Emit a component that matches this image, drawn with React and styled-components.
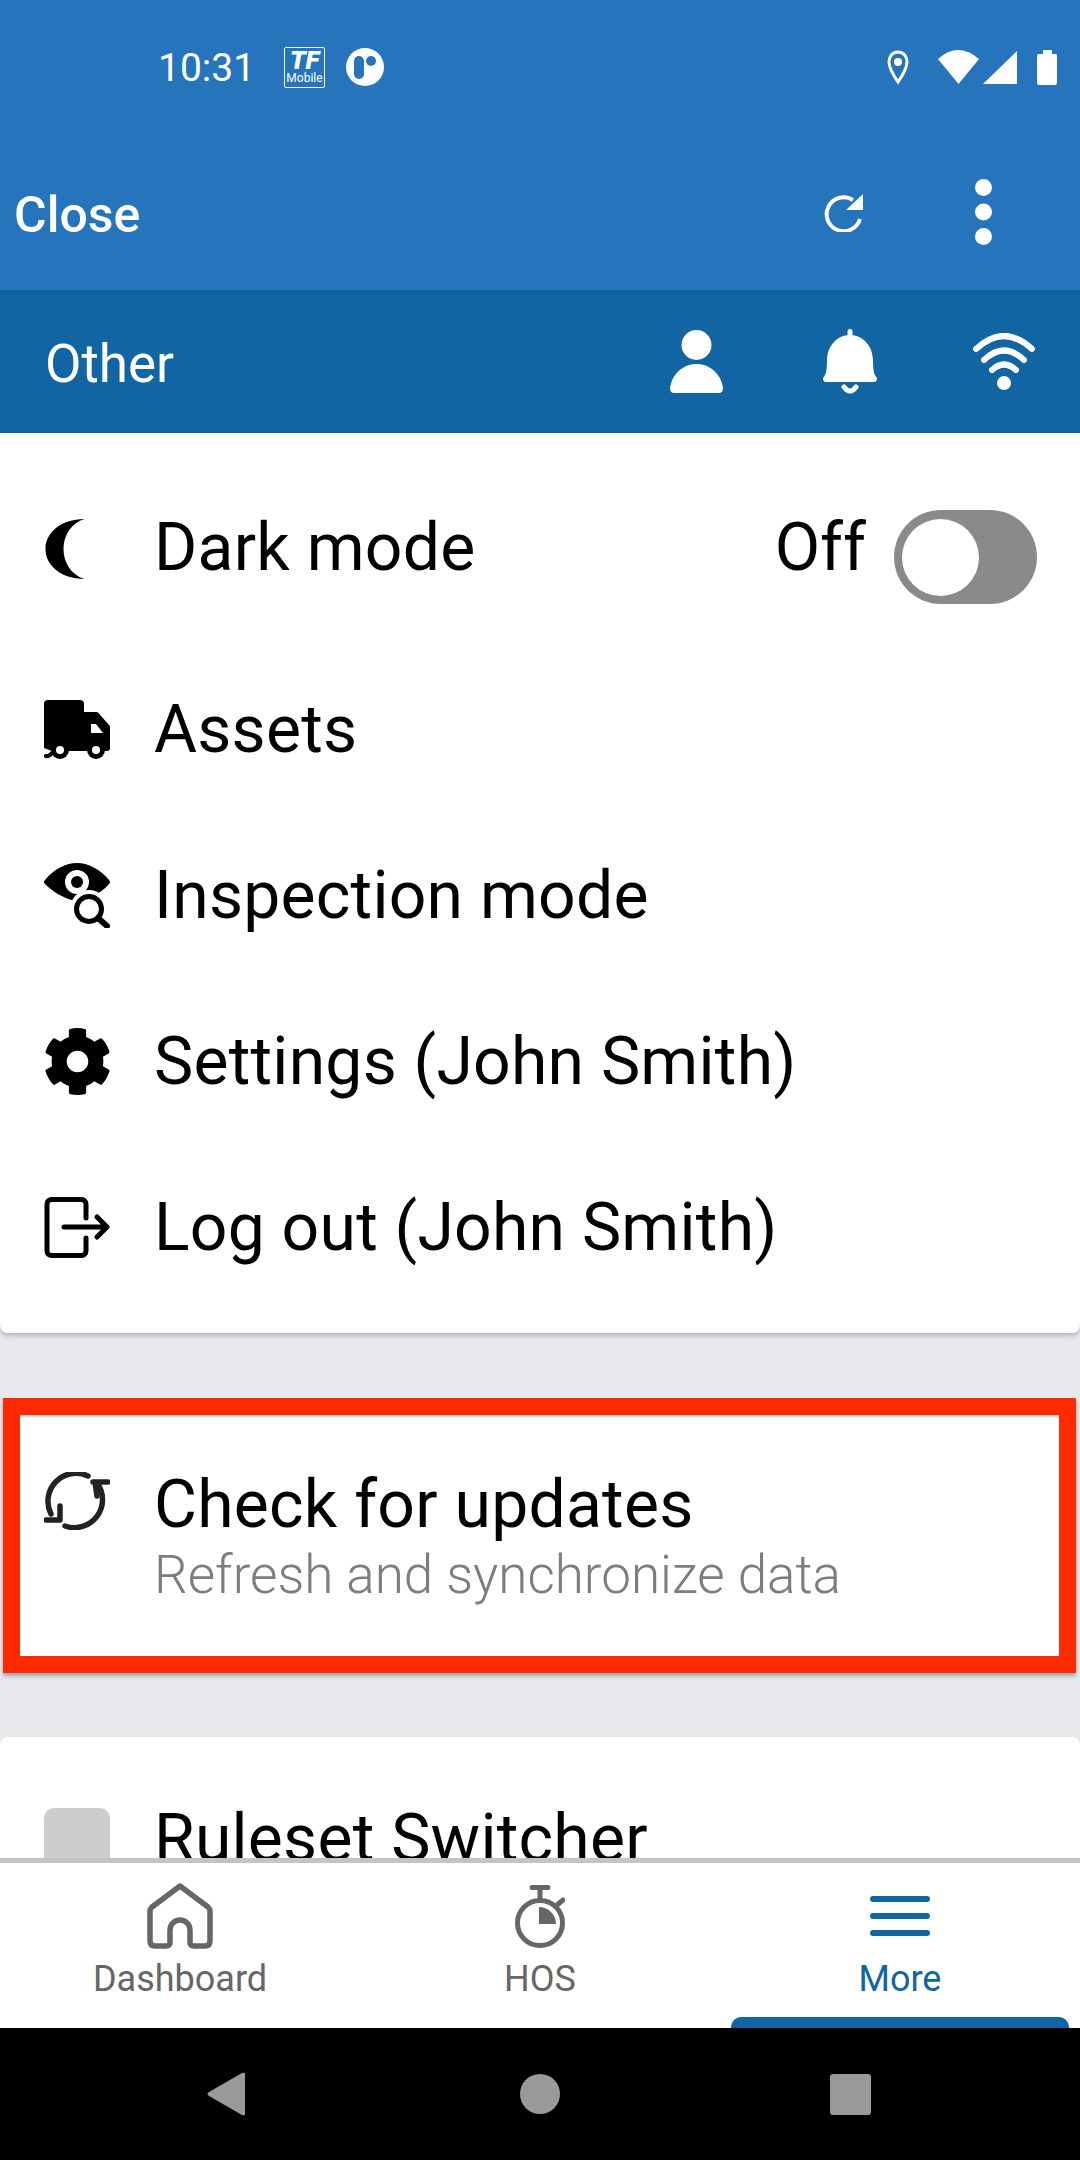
import styled, { createGlobalStyle } from "styled-components";
import { FaCog } from "react-icons/fa";

const GlobalStyle = createGlobalStyle`
  html, body {
    margin: 0;
    padding: 0;
    background: #000;
  }
  * {
    box-sizing: border-box;
  }
`;

const Page = styled.div`
  width: 1080px;
  height: 2160px;
  display: flex;
  flex-direction: column;
  overflow: hidden;
  font-family: Roboto, "Liberation Sans", sans-serif;
  background: #e8e9ed;
`;

const TopBar = styled.header`
  height: 290px;
  flex: none;
  background: #2574bc;
  color: #fff;
  display: flex;
  flex-direction: column;
`;

const StatusBar = styled.div`
  height: 134px;
  padding: 0 22px 0 158px;
  display: flex;
  align-items: center;
`;

const Clock = styled.span`
  font-size: 39px;
  font-weight: 400;
  width: 126px;
  padding-top: 2px;
`;

const TfBadge = styled.div`
  width: 41px;
  height: 41px;
  border: 1.5px solid #fff;
  border-radius: 2px;
  display: flex;
  flex-direction: column;
  align-items: center;
  line-height: 1;
  margin-right: 21px;
`;

const TfMark = styled.span`
  font-size: 26px;
  font-weight: 900;
  font-style: italic;
  line-height: 24px;
`;

const TfSub = styled.span`
  font-size: 12px;
  line-height: 12px;
`;

const StatusRight = styled.div`
  margin-left: auto;
  display: flex;
  align-items: center;
`;

const Toolbar = styled.div`
  height: 156px;
  padding-left: 14px;
  display: flex;
  align-items: center;
`;

const CloseLabel = styled.span`
  font-size: 50px;
  font-weight: 500;
  padding-top: 5px;
`;

const ToolActions = styled.div`
  margin-left: auto;
  display: flex;
  align-items: center;
  padding-right: 88px;
  gap: 112px;
`;

const SubHeader = styled.div`
  height: 143px;
  flex: none;
  background: #1165a2;
  box-shadow: inset 0 3px 3px -2px #0e5a92;
  color: #fff;
  padding: 0 45px;
  display: flex;
  align-items: center;
`;

const SubTitle = styled.span`
  font-size: 53px;
  font-weight: 400;
  padding-top: 4px;
`;

const SubActions = styled.div`
  margin-left: auto;
  display: flex;
  align-items: center;

  svg:nth-child(1) {
    margin-right: 100px;
  }
  svg:nth-child(2) {
    margin-right: 96px;
  }
`;

const Content = styled.main`
  flex: 1;
  min-height: 0;
  overflow: hidden;
`;

const Card = styled.section`
  background: #fff;
  border-radius: 8px;
  padding: 15px 0 23px;
  box-shadow: 0 3px 4px rgba(0, 0, 0, 0.2);
`;

const FlatCard = styled(Card)`
  border-radius: 0 0 8px 8px;
`;

const Row = styled.div`
  height: ${(p) => (p.$tall ? 198 : 166)}px;
  padding: 0 43px 0 44px;
  display: flex;
  align-items: center;
  color: #000;
`;

const IconSlot = styled.span`
  width: 66px;
  flex: none;
  margin-right: 44px;
  display: flex;
  justify-content: center;
  align-items: center;
  font-size: 69px;
  line-height: 0;

  svg {
    flex: none;
  }
`;

const RowLabel = styled.span`
  font-size: 66px;
  font-weight: 400;
  letter-spacing: 0.25px;
  white-space: nowrap;
  padding-top: ${(p) => (p.$low ? 6 : 0)}px;
`;

const ToggleGroup = styled.div`
  margin-left: auto;
  display: flex;
  align-items: center;
  gap: 28px;
  font-size: 66px;
`;

const ToggleTrack = styled.span`
  width: 143px;
  height: 94px;
  margin-top: 20px;
  border-radius: 47px;
  background: #8a8a8a;
  display: flex;
  align-items: center;
  padding: 0 8px;
`;

const ToggleThumb = styled.span`
  width: 77px;
  height: 77px;
  border-radius: 50%;
  background: #fff;
`;

const UpdateCard = styled.section`
  margin: 65px 4px 64px 3px;
  height: 275px;
  border: 17px solid #ff2a00;
  background: #fff;
  box-shadow: 0 3px 4px rgba(0, 0, 0, 0.3), inset 0 3px 3px -2px rgba(0, 0, 0, 0.25);
  padding: 57px 0 0 24px;
  display: flex;
  align-items: flex-start;
`;

const UpdateText = styled.div`
  display: flex;
  flex-direction: column;
`;

const UpdateTitle = styled.span`
  font-size: 66px;
  line-height: 66px;
  letter-spacing: 0.25px;
  color: #000;
`;

const UpdateSub = styled.span`
  font-size: 53px;
  font-weight: 300;
  line-height: 60px;
  margin-top: 7px;
  color: #7d7d7d;
`;

const Placeholder = styled.span`
  width: 66px;
  height: 66px;
  margin-top: 12px;
  border-radius: 10px;
  background: #cdcdcd;
`;

const TabBar = styled.nav`
  height: 170px;
  flex: none;
  border-top: 5px solid #c4c4c8;
  background: #fff;
  display: flex;
`;

const Tab = styled.div`
  width: 360px;
  padding-top: 20px;
  display: flex;
  flex-direction: column;
  align-items: center;
  color: ${(p) => (p.$active ? "#1165a2" : "#666")};
`;

const TabIcon = styled.span`
  height: 66px;
  display: flex;
  align-items: center;
  line-height: 0;
`;

const TabLabel = styled.span`
  font-size: 36px;
  line-height: 42px;
  margin-top: 9px;
`;

const TabMarker = styled.span`
  width: 338px;
  height: 11px;
  margin-top: auto;
  border-radius: 10px 10px 0 0;
  background: #1165a2;
`;

const SystemNav = styled.div`
  height: 132px;
  flex: none;
  background: #000;
  padding-left: 207px;
  display: flex;
  align-items: center;
`;

const NavDot = styled.span`
  width: 40px;
  height: 40px;
  margin-left: 275px;
  border-radius: 50%;
  background: #999;
`;

const NavSquare = styled.span`
  width: 41px;
  height: 41px;
  margin-left: 270px;
  border-radius: 3px;
  background: #999;
`;

const MoonSvg = styled.svg`
  margin: 3px 23px 0 0;
`;

const Moon = () => (
  <MoonSvg width="41" height="60" viewBox="0 0 40 60" fill="#000">
    <path d="M39 0C15 0 0 14 0 30c0 16 15 30 39 30C26 56 18 44 18 30 18 16 26 4 39 0Z" />
  </MoonSvg>
);

const Truck = () => (
  <svg width="66" height="59" viewBox="0 0 66 59">
    <path d="M4 0h32a4 4 0 0 1 4 4v8h12a3 3 0 0 1 2.500 1L65 25a4 4 0 0 1 1 3v20a3 3 0 0 1-3 3H4a4 4 0 0 1-4-4V4a4 4 0 0 1 4-4Z" />
    <path d="M47 24h5l7 9H47Z" fill="#fff" />
    <path d="M0 48l8 3-6 3Z" fill="#fff" />
    <circle cx="16" cy="50" r="9" />
    <circle cx="52" cy="50" r="9" />
    <circle cx="16" cy="50" r="4" fill="#fff" />
    <circle cx="52" cy="50" r="4" fill="#fff" />
    <path d="M2 56c3 1 5-2 7-4" stroke="#000" strokeWidth="4" strokeLinecap="round" fill="none" />
  </svg>
);

const EyeSearch = () => (
  <svg width="66" height="65" viewBox="0 0 66 65">
    <path d="M1 17C10 6 22 0 33 0s23 6 32 17q2 2 0 4c-5 6-12 10-18 13l-15 4C20 36 8 28 1 21q-2-2 0-4Z" />
    <circle cx="33" cy="19" r="12" fill="#fff" />
    <circle cx="33" cy="19" r="6" />
    <circle cx="45" cy="46" r="19" fill="#fff" />
    <circle cx="45" cy="46" r="12.500" fill="none" stroke="#000" strokeWidth="5" />
    <path d="M54 55l9 8" stroke="#000" strokeWidth="6" strokeLinecap="round" />
  </svg>
);

const LogOut = () => (
  <svg width="66" height="61" viewBox="0 0 66 61" fill="none" stroke="#000" strokeWidth="5" strokeLinecap="round" strokeLinejoin="round">
    <path d="M42 21V7a4.500 4.500 0 0 0-4.500-4.500h-30A4.500 4.500 0 0 0 3 7v47a4.500 4.500 0 0 0 4.500 4.500h30A4.500 4.500 0 0 0 42 54V41" />
    <path d="M20 30h42M53 20l10 10-10 10" />
  </svg>
);

const Sync = () => (
  <svg width="66" height="58" viewBox="0 0 66 58" fill="none" stroke="#222" strokeWidth="5.500" strokeLinecap="round" strokeLinejoin="round">
    <path d="M44 4A28 28 0 0 0 7 42" />
    <path d="M21 54A28 28 0 0 0 53 11" />
    <path d="M16 34v14H2M49 10h15M51 10l2 14" />
  </svg>
);

const Refresh = () => (
  <svg width="39" height="39" viewBox="0 0 39 39" fill="none">
    <path d="M36 26A17 17 0 1 1 29 7" stroke="#fff" strokeWidth="4" />
    <path d="M39 1v16H22Z" fill="#fff" />
  </svg>
);

const Dots = () => (
  <svg width="17" height="66" viewBox="0 0 17 66" fill="#fff">
    <circle cx="8.500" cy="8.500" r="8.500" />
    <circle cx="8.500" cy="33" r="8.500" />
    <circle cx="8.500" cy="57.500" r="8.500" />
  </svg>
);

const Person = () => (
  <svg width="53" height="63" viewBox="0 0 53 63" fill="#fff">
    <circle cx="26.500" cy="15" r="15" />
    <path d="M0 58C2 44 13 34 26.500 34S51 44 53 58q0 5-4 5H4q-4 0-4-5Z" />
  </svg>
);

const Bell = () => (
  <svg width="54" height="66" viewBox="0 0 54 66" fill="#fff">
    <rect x="24.500" y="0" width="5" height="10" rx="2.500" />
    <path d="M27 6C14 6 4 17 4 32c0 8-1 14-4 17q0 4 3 4h48q3 0 3-4c-3-3-4-9-4-17C50 17 40 6 27 6Z" />
    <path d="M21 58q6 8 12 0" fill="none" stroke="#fff" strokeWidth="5" strokeLinecap="round" />
  </svg>
);

const Wifi = () => (
  <svg width="62" height="58" viewBox="0 0 62 58" fill="none" stroke="#fff" strokeWidth="6" strokeLinecap="round">
    <path d="M3 16Q31-10 59 16" />
    <path d="M11 27Q31 8 51 27" />
    <path d="M19 37Q31 26 43 37" />
    <circle cx="31" cy="50" r="7" fill="#fff" stroke="none" />
  </svg>
);

const Capsule = () => (
  <svg width="38" height="38" viewBox="0 0 38 38">
    <circle cx="19" cy="19" r="19" fill="#fff" />
    <rect x="8" y="8" width="10" height="23" rx="5" fill="#2574bc" />
    <circle cx="25" cy="13" r="5" fill="#2574bc" />
  </svg>
);

const StatusIcons = () => (
  <svg width="172" height="36" viewBox="0 0 172 36" fill="#fff">
    <path d="M12 3C6 3 3 8 3 13c0 7 9 20 9 20s9-13 9-20c0-5-3-10-9-10Z" fill="none" stroke="#fff" strokeWidth="3" />
    <circle cx="12" cy="13" r="4" />
    <path d="M52 10Q72-8 93 10L72.500 35Z" />
    <path d="M131 2v33H97Z" />
    <path d="M157 5h4V1h9v4h4a2 2 0 0 1 1 2v27a2 2 0 0 1-2 2h-16a2 2 0 0 1-2-2V7a2 2 0 0 1 2-2Z" transform="translate(-4 0)" />
  </svg>
);

const Home = () => (
  <svg width="66" height="66" viewBox="0 0 66 66" fill="none" stroke="currentColor" strokeWidth="5.500" strokeLinejoin="round" strokeLinecap="round">
    <path d="M33 3 5 24q-2 2-2 4v30q0 5 5 5h11q4 0 4-4V47a10 10 0 0 1 20 0v12q0 4 4 4h11q5 0 5-5V28q0-2-2-4Z" />
  </svg>
);

const Stopwatch = () => (
  <svg width="50" height="63" viewBox="0 0 50 63" fill="none" stroke="currentColor" strokeWidth="5" strokeLinecap="round">
    <path d="M17 2.500h16M25 3v11M42 20l6-5" />
    <circle cx="25" cy="38" r="22.500" />
    <path d="M24 39V22a17 17 0 0 1 17 17Z" fill="currentColor" stroke="none" />
  </svg>
);

const Menu = () => (
  <svg width="60" height="40" viewBox="0 0 60 40" fill="none" stroke="currentColor" strokeWidth="6" strokeLinecap="round">
    <path d="M3 3h54M3 20h54M3 37h54" />
  </svg>
);

const BackArrow = () => (
  <svg width="38" height="44" viewBox="0 0 38 44" fill="#999">
    <path d="M38 2v40q0 2-3 1L2 24q-3-2 0-4L35 1q3-1 3 1Z" />
  </svg>
);

const App = () => {
  return (
    <Page>
      <GlobalStyle />
      <TopBar>
        <StatusBar>
          <Clock>10:31</Clock>
          <TfBadge>
            <TfMark>TF</TfMark>
            <TfSub>Mobile</TfSub>
          </TfBadge>
          <Capsule />
          <StatusRight>
            <StatusIcons />
          </StatusRight>
        </StatusBar>
        <Toolbar>
          <CloseLabel>Close</CloseLabel>
          <ToolActions>
            <Refresh />
            <Dots />
          </ToolActions>
        </Toolbar>
      </TopBar>
      <SubHeader>
        <SubTitle>Other</SubTitle>
        <SubActions>
          <Person />
          <Bell />
          <Wifi />
        </SubActions>
      </SubHeader>
      <Content>
        <FlatCard>
          <Row $tall>
            <IconSlot><Moon /></IconSlot>
            <RowLabel>Dark mode</RowLabel>
            <ToggleGroup>
              Off
              <ToggleTrack><ToggleThumb /></ToggleTrack>
            </ToggleGroup>
          </Row>
          <Row>
            <IconSlot><Truck /></IconSlot>
            <RowLabel>Assets</RowLabel>
          </Row>
          <Row>
            <IconSlot><EyeSearch /></IconSlot>
            <RowLabel>Inspection mode</RowLabel>
          </Row>
          <Row>
            <IconSlot><FaCog /></IconSlot>
            <RowLabel>Settings (John Smith)</RowLabel>
          </Row>
          <Row>
            <IconSlot><LogOut /></IconSlot>
            <RowLabel>Log out (John Smith)</RowLabel>
          </Row>
        </FlatCard>
        <UpdateCard>
          <IconSlot><Sync /></IconSlot>
          <UpdateText>
            <UpdateTitle>Check for updates</UpdateTitle>
            <UpdateSub>Refresh and synchronize data</UpdateSub>
          </UpdateText>
        </UpdateCard>
        <Card>
          <Row>
            <IconSlot><Placeholder /></IconSlot>
            <RowLabel $low>Ruleset Switcher</RowLabel>
          </Row>
        </Card>
      </Content>
      <TabBar>
        <Tab>
          <TabIcon><Home /></TabIcon>
          <TabLabel>Dashboard</TabLabel>
        </Tab>
        <Tab>
          <TabIcon><Stopwatch /></TabIcon>
          <TabLabel>HOS</TabLabel>
        </Tab>
        <Tab $active>
          <TabIcon><Menu /></TabIcon>
          <TabLabel>More</TabLabel>
          <TabMarker />
        </Tab>
      </TabBar>
      <SystemNav>
        <BackArrow />
        <NavDot />
        <NavSquare />
      </SystemNav>
    </Page>
  );
};

export default App;
